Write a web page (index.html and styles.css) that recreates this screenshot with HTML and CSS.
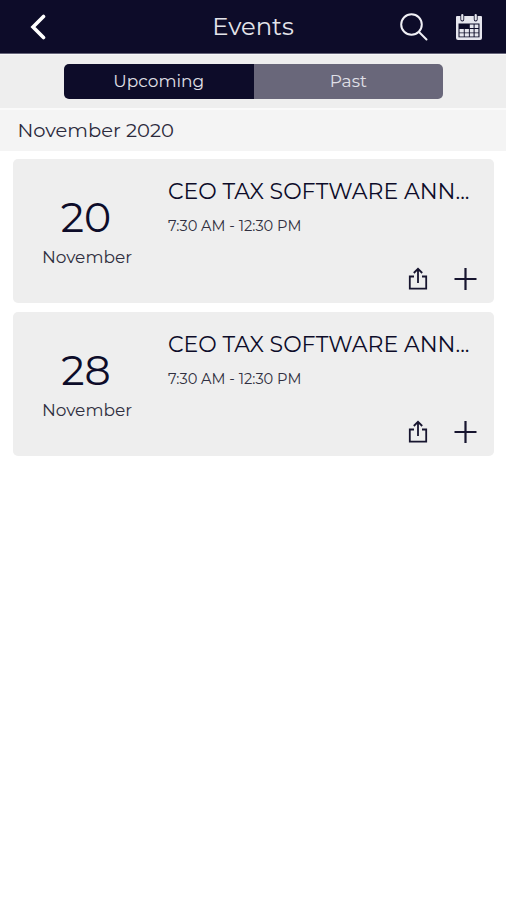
FILE: index.html
```html
<!DOCTYPE html>
<html lang="en">
<head>
  <meta charset="UTF-8" />
  <meta name="viewport" content="width=device-width, initial-scale=1.0" />
  <title>Events</title>
  <link rel="stylesheet" href="styles.css">
</head>
<body>
  <header class="header">
    <svg class="back" viewBox="0 0 16 26" width="16" height="26"><path d="M13.5 2.5 L3 13 L13.5 23.5"/></svg>
    <h1>Events</h1>
    <div class="header-icons">
      <svg class="search" viewBox="0 0 28 28" width="28" height="28">
        <circle cx="11.5" cy="11.5" r="10.3"/>
        <path d="M19 19 L26.5 26.5"/>
      </svg>
      <svg class="calendar" viewBox="0 0 28 28" width="28" height="28">
        <path class="frame" d="M2 3h24a1 1 0 0 1 1 1v21a2 2 0 0 1-2 2H3a2 2 0 0 1-2-2V4a1 1 0 0 1 1-1z"/>
        <path class="inner" d="M3.5 10.5h21v13.8h-21z"/>
        <path class="ring-gaps" d="M7.3 2v4.5M20.7 2v4.5"/>
        <path class="rings" d="M7.3 2v4.5M20.7 2v4.5"/>
        <path class="days" d="M14.8 11.5h3.8v3.6h-3.8zM19.6 11.5h3.8v3.6h-3.8zM4.5 15.9h4.3v3.5H4.5zM9.7 15.9h4.2v3.5H9.7zM14.8 15.9h3.8v3.5h-3.8zM19.6 15.9h3.8v3.5h-3.8zM4.5 20.2h4.3v3.3H4.5zM9.7 20.2h4.2v3.3H9.7zM14.8 20.2h3.8v3.3h-3.8zM19.6 20.2h3.8v3.3h-3.8z"/>
      </svg>
    </div>
  </header>

  <div class="tabs">
    <button class="active">Upcoming</button>
    <button>Past</button>
  </div>

  <h2 class="month">November 2020</h2>

  <div class="event-list">
    <div class="event">
      <div class="date">
        <div class="day">20</div>
        <div class="date-month">November</div>
      </div>
      <div class="info">
        <div class="title">CEO TAX SOFTWARE ANN...</div>
        <div class="time">7:30 AM - 12:30 PM</div>
        <div class="actions">
          <svg viewBox="0 0 20 24" width="20" height="24"><path d="M6 9.5H1.8v12.2h16.4V9.5H14M10 16V2.5M5.8 6L10 1.8L14.2 6"/></svg>
          <svg class="plus" viewBox="0 0 24 24" width="24" height="24"><path d="M12.5 1v22M1.5 12h22"/></svg>
        </div>
      </div>
    </div>

    <div class="event">
      <div class="date">
        <div class="day">28</div>
        <div class="date-month">November</div>
      </div>
      <div class="info">
        <div class="title">CEO TAX SOFTWARE ANN...</div>
        <div class="time">7:30 AM - 12:30 PM</div>
        <div class="actions">
          <svg viewBox="0 0 20 24" width="20" height="24"><path d="M6 9.5H1.8v12.2h16.4V9.5H14M10 16V2.5M5.8 6L10 1.8L14.2 6"/></svg>
          <svg class="plus" viewBox="0 0 24 24" width="24" height="24"><path d="M12.5 1v22M1.5 12h22"/></svg>
        </div>
      </div>
    </div>
  </div>
</body>
</html>
```
FILE: styles.css
```css
* {
  box-sizing: border-box;
}

body {
  font-family: Montserrat, Inter, sans-serif;
  margin: 0;
  background: #fff;
  color: #0d0c29;
}

svg {
  display: block;
  fill: none;
}

/* Header */
.header {
  display: grid;
  grid-template-columns: 130px 1fr 130px;
  align-items: center;
  height: 54px;
  background: #0d0c29;
  border-bottom: 1px solid #66657a;
  color: #e4e4ea;
}

.back {
  margin-left: 30px;
  stroke: #fff;
  stroke-width: 3.6;
  stroke-linecap: round;
}

h1 {
  margin: 0;
  padding-bottom: 1px;
  font-size: 24.3px;
  font-weight: 400;
  line-height: 29px;
  text-align: center;
}

.header-icons {
  display: flex;
  gap: 27px;
  margin-left: 24px;
}

.search {
  stroke: #f0f0f5;
  stroke-width: 2;
  stroke-linecap: round;
}

.frame,
.days {
  fill: #e6e6ee;
}

.inner {
  fill: #0d0c29;
}

.rings {
  stroke: #e6e6ee;
  stroke-width: 2.2;
  stroke-linecap: round;
}

.ring-gaps {
  stroke: #0d0c29;
  stroke-width: 3.8;
  stroke-linecap: round;
}

/* Tabs */
.tabs {
  display: flex;
  height: 54px;
  padding: 9px 63px 9px 64px;
  background: #eee;
  border-top: 1px solid #f8f8f8;
}

.tabs button {
  flex: 1;
  padding: 0 0 1px;
  border: none;
  border-radius: 0 5px 5px 0;
  background: #69677a;
  color: #e0e0e8;
  font-family: inherit;
  font-size: 17px;
  font-weight: 400;
}

.tabs .active {
  border-radius: 5px 0 0 5px;
  background: #0d0c29;
}

.month {
  margin: 0;
  height: 43px;
  padding-left: 17.5px;
  background: #f4f4f4;
  border-top: 2px solid #fafafa;
  color: #2b2a3c;
  font-size: 19.5px;
  font-weight: 400;
  line-height: 40px;
}

/* Events */
.event-list {
  display: flex;
  flex-direction: column;
  gap: 9px;
  padding: 8px 12px 0 13px;
}

.event {
  display: flex;
  height: 144px;
  border-radius: 5px;
  background: #eee;
}

.date {
  width: 148px;
  padding-top: 33px;
  text-align: center;
}

.day {
  padding-right: 2px;
  font-size: 41px;
  font-weight: 400;
  line-height: 50px;
}

.date-month {
  color: #302f40;
  font-size: 17px;
  font-weight: 400;
  line-height: 30px;
}

.info {
  flex: 1;
  padding: 18px 17px 0 7px;
  white-space: nowrap;
}

.title {
  font-size: 22px;
  font-weight: 400;
  line-height: 30px;
}

.time {
  margin-top: 8px;
  color: #302f40;
  font-size: 14.6px;
  font-weight: 400;
  line-height: 22px;
}

.actions {
  display: flex;
  justify-content: flex-end;
  gap: 25px;
  margin-top: 29.5px;
  stroke: #17152f;
  stroke-width: 1.8;
}

.plus {
  stroke-width: 2.2;
}
```
